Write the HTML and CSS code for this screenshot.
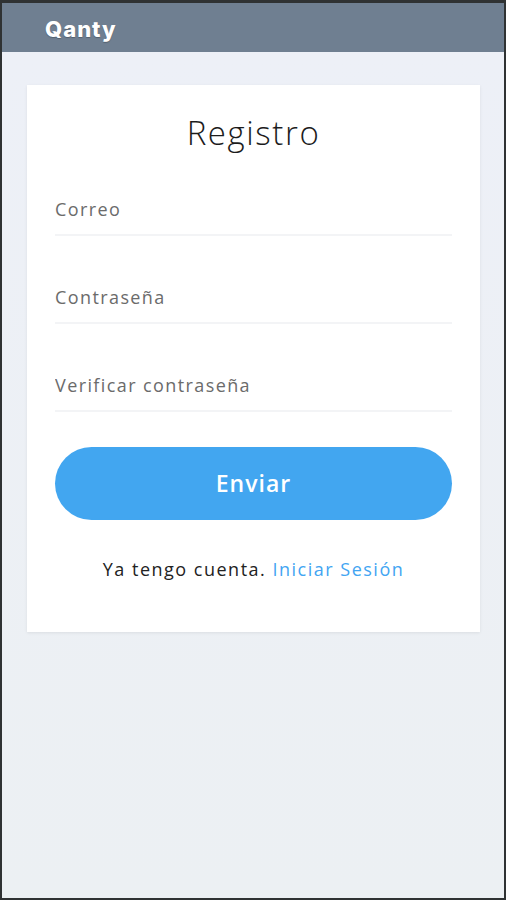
FILE: index.html
```html
<!DOCTYPE html>
<html lang="es">
<head>
    <meta charset="utf-8">
    <link rel="stylesheet" href="styles.css">
</head>
<body>
<!-- marco del dispositivo -->
<div class="frame">
    <div class="topbar">
        <span class="brand">Qanty</span>
    </div>
    <div class="content">
        <form class="card">
            <h1 class="title">Registro</h1>
            <div class="field"><input type="text" placeholder="Correo"></div>
            <div class="field"><input type="password" placeholder="Contraseña"></div>
            <div class="field"><input type="password" placeholder="Verificar contraseña"></div>
            <button type="button" class="send">Enviar</button>
            <p class="foot">Ya tengo cuenta. <a href="#">Iniciar Sesión</a></p>
        </form>
    </div>
</div>
</body>
</html>
```

FILE: styles.css
```css
*{margin: 0;padding: 0;box-sizing: border-box;}
body{background: #2f3233;font-family: "Open Sans", "Noto Sans", sans-serif;}
/*marco y barra superior*/
.frame{height: 900px;padding: 3px 2px 2px 2px;display: flex;flex-direction: column;}
.topbar{height: 49px;background: #6f7f91;display: flex;align-items: center;padding-left: 43px;padding-top: 2px;}
.brand{color: #fff;font-family: "Inter", sans-serif;font-weight: 800;font-size: 22px;letter-spacing: 1px;text-shadow: 0 1px 1px rgba(0,0,0,0.25);}
.content{flex: 1;background: linear-gradient(#edf0f7, #ecf0f3);padding: 33px 24px 0 25px;}
/*tarjeta del formulario*/
.card{background: #fff;height: 547px;padding: 29px 28px 0 28px;box-shadow: 0 1px 3px rgba(0,0,0,0.08);display: flex;flex-direction: column;}
.title{font-weight: 300;font-size: 33px;color: #1c1c1c;text-align: center;line-height: 38px;margin-bottom: 36px;letter-spacing: 1.6px;}
.field{border-bottom: 2px solid #f3f4f6;padding-bottom: 4px;margin-bottom: 40px;}
.field input{border: none;outline: none;width: 100%;height: 42px;font-family: inherit;font-size: 18px;color: #555;background: transparent;letter-spacing: 1.4px;}
.field input::placeholder{color: #6b6b6b;}
.field:nth-child(4){margin-bottom: 35px;}
.send{height: 73px;border: none;border-radius: 37px;background: #42a6f0;color: #fff;font-family: inherit;font-size: 23px;font-weight: 600;letter-spacing: 1px;padding-bottom: 2px;}
.foot{margin-top: 37px;text-align: center;font-size: 18px;color: #222;letter-spacing: 1.5px;}
.foot a{color: #42a5f2;text-decoration: none;}
```
